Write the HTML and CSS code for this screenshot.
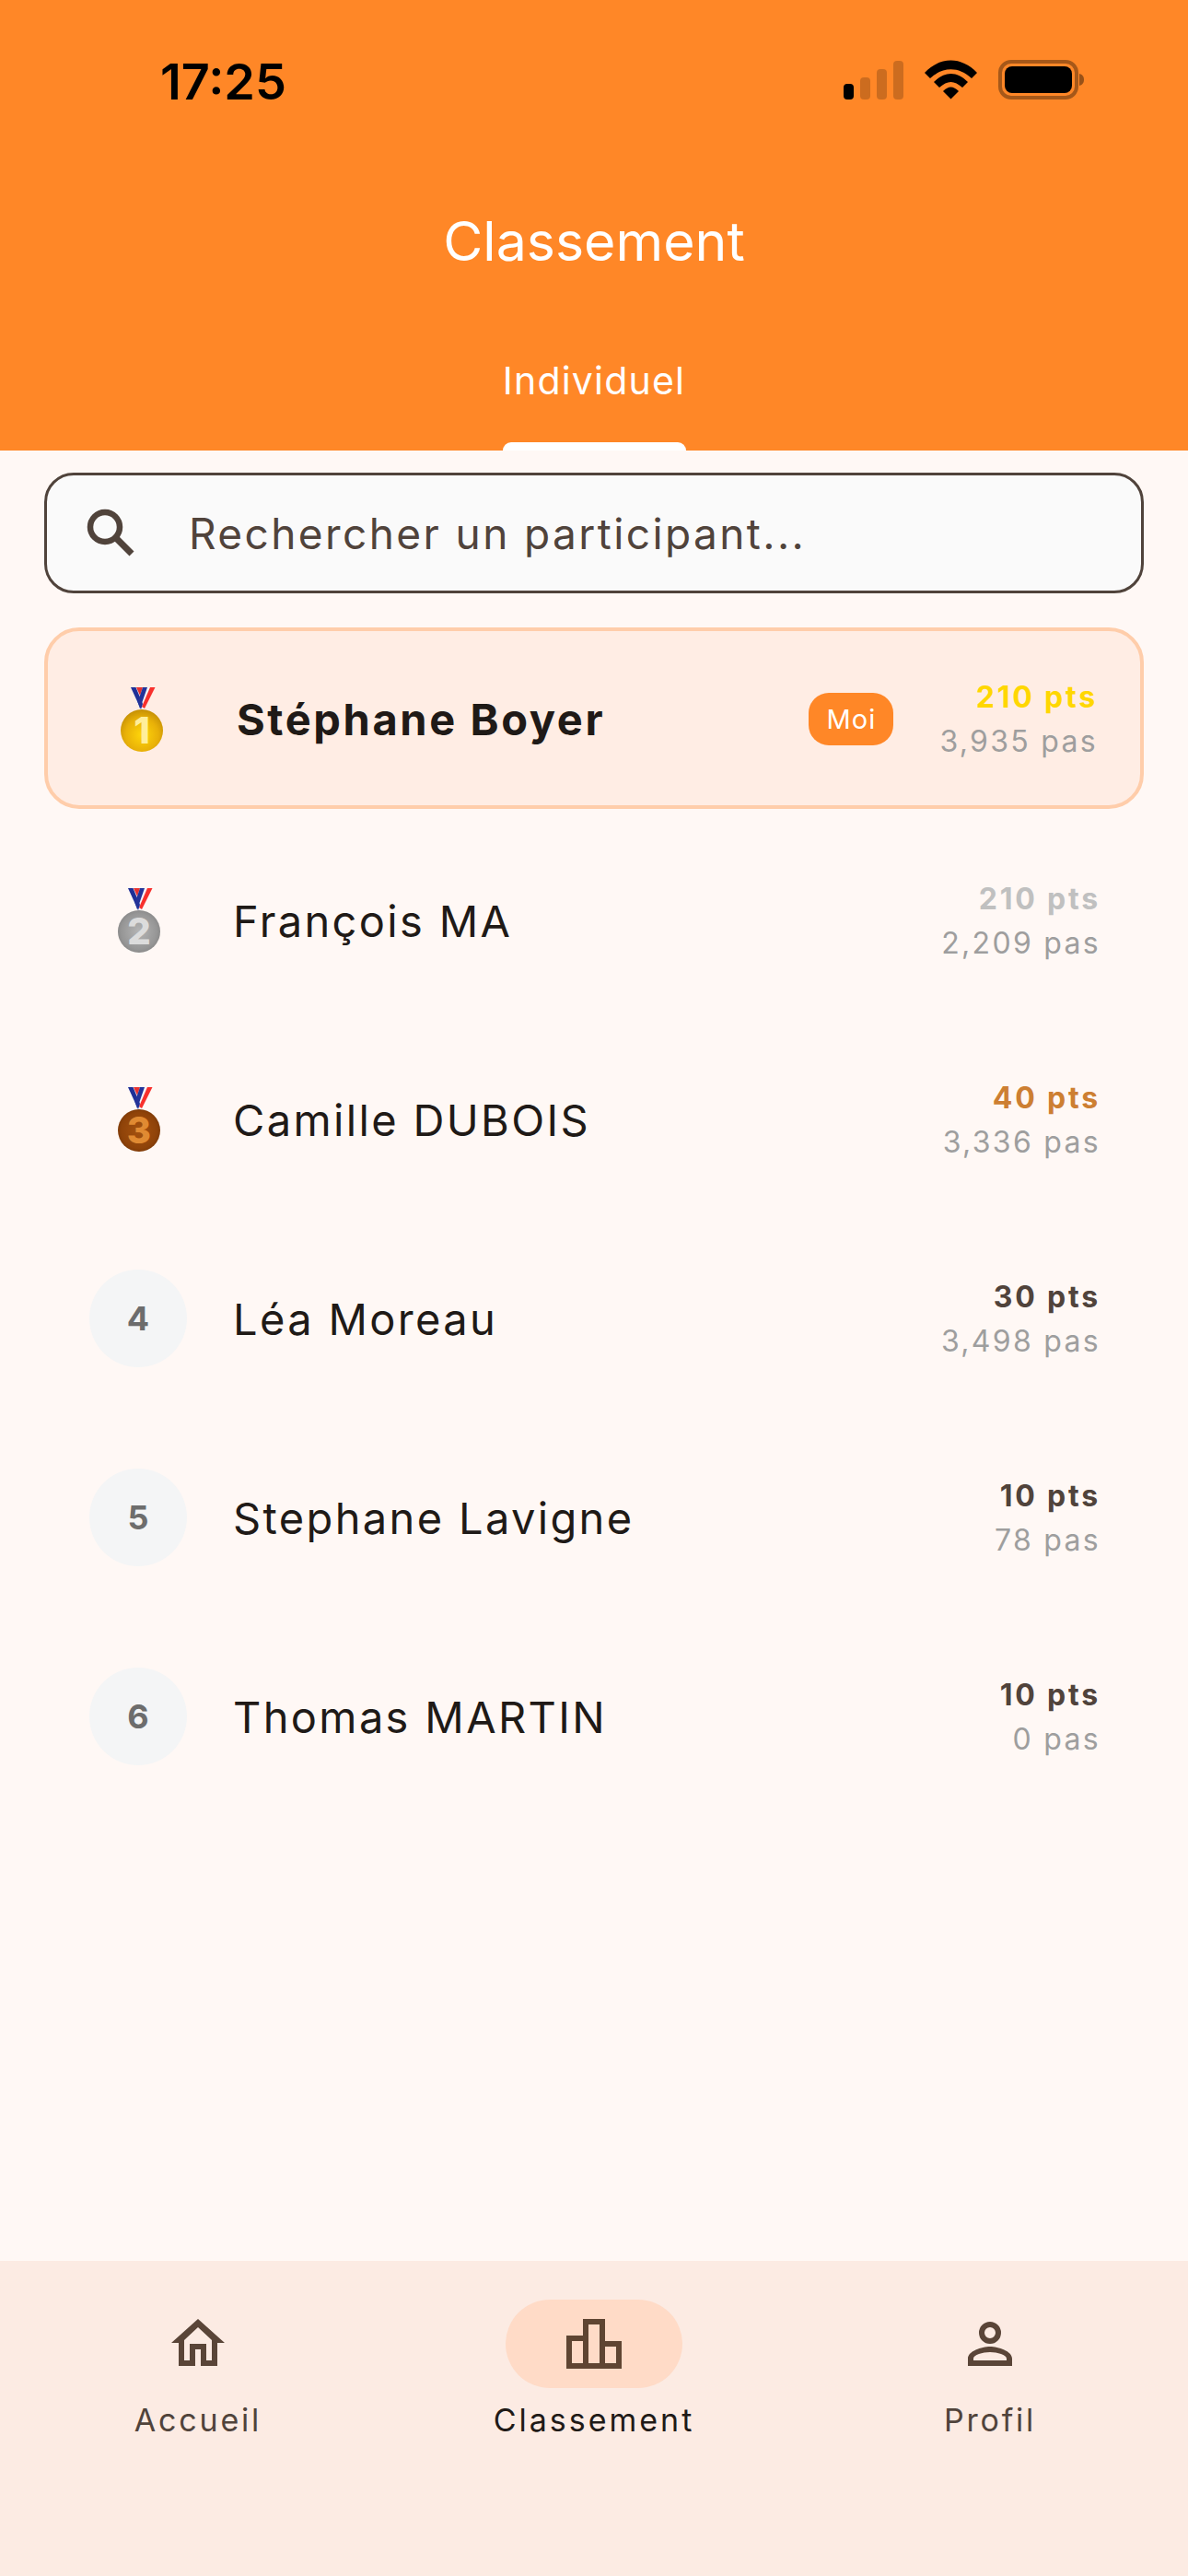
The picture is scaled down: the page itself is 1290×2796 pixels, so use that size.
FILE: index.html
```html
<!DOCTYPE html>
<html lang="fr">
<head>
<meta charset="utf-8">
<title>Classement</title>
<link rel="stylesheet" href="styles.css">
</head>
<body>
<div class="app">
  <header class="header">
    <div class="status">
      <span class="time">17:25</span>
      <svg class="status-icons" width="261" height="43" viewBox="0 0 261 43">
        <rect x="0" y="26" width="11" height="17" rx="4" fill="#000"/>
        <rect x="18" y="19" width="11" height="24" rx="4" fill="#000" fill-opacity=".2"/>
        <rect x="36" y="10" width="11" height="33" rx="4" fill="#000" fill-opacity=".2"/>
        <rect x="54" y="1" width="11" height="42" rx="4" fill="#000" fill-opacity=".2"/>
        <path d="M88 14 C105 -4 128 -4 145 14 L139 20 C125 7 108 7 94 20 Z" fill="#000"/>
        <path d="M98 24 C110 12 123 12 135 24 L129 30 C120 22 113 22 104 30 Z" fill="#000"/>
        <path d="M108 34 C114 28 119 28 125 34 L116.500 42.500 Z" fill="#000"/>
        <rect x="170" y="2" width="83" height="39" rx="12" fill="none" stroke="#000" stroke-opacity=".35" stroke-width="4"/>
        <rect x="175" y="7" width="73" height="29" rx="8" fill="#000"/>
        <path d="M256 15 C260 16 261 19 261 21.500 C261 24 260 27 256 28 Z" fill="#000" fill-opacity=".4"/>
      </svg>
    </div>
    <h1 class="title">Classement</h1>
    <div class="tab">Individuel</div>
    <div class="tab-bar"></div>
  </header>

  <main class="content">
    <div class="search">
      <svg class="search-icon" width="60" height="60" viewBox="0 0 60 60">
        <circle cx="24" cy="23" r="16" fill="none" stroke="#50433B" stroke-width="6.500"/>
        <path d="M36 35 L53 52" fill="none" stroke="#50433B" stroke-width="7"/>
      </svg>
      <span class="search-text">Rechercher un participant...</span>
    </div>

    <ul class="list">
      <li class="row row-me">
        <div class="rank">
          <svg class="medal" width="60" height="70" viewBox="0 0 60 70">
            <defs><radialGradient id="gold" cx=".5" cy=".6" r=".6"><stop offset="0" stop-color="#FFD60A"/><stop offset=".65" stop-color="#E8B008"/><stop offset="1" stop-color="#C48F06"/></radialGradient></defs>
            <polygon points="18,0 44,0 33,24 28,24" fill="#F4F4F8"/>
            <polygon points="24,0 31,0 28,9" fill="#E8322F"/>
            <polygon points="39,0 44.500,0 33,23 30,21" fill="#F8302C"/>
            <polygon points="18,0 23.500,0 31,18 29,24" fill="#1F2F96"/>
            <polygon points="31,0 36,0 28,23 25.500,16" fill="#233399"/>
            <circle cx="30" cy="47" r="23" fill="url(#gold)"/>
            <text class="medal-digit medal-digit-gold" x="30" y="61">1</text>
          </svg>
        </div>
        <span class="name name-me">Stéphane Boyer</span>
        <span class="badge">Moi</span>
        <div class="score">
          <span class="pts pts-gold">210 pts</span>
          <span class="pas">3,935 pas</span>
        </div>
      </li>
      <li class="row">
        <div class="rank">
          <svg class="medal" width="60" height="70" viewBox="0 0 60 70">
            <defs><radialGradient id="silver" cx=".5" cy=".5" r=".6"><stop offset="0" stop-color="#B5B5B5"/><stop offset=".7" stop-color="#969696"/><stop offset="1" stop-color="#7E7E7E"/></radialGradient></defs>
            <polygon points="18,0 44,0 33,24 28,24" fill="#F4F4F8"/>
            <polygon points="24,0 31,0 28,9" fill="#E8322F"/>
            <polygon points="39,0 44.500,0 33,23 30,21" fill="#F8302C"/>
            <polygon points="18,0 23.500,0 31,18 29,24" fill="#1F2F96"/>
            <polygon points="31,0 36,0 28,23 25.500,16" fill="#233399"/>
            <circle cx="30" cy="47" r="23" fill="url(#silver)"/>
            <text class="medal-digit medal-digit-silver" x="30" y="61">2</text>
          </svg>
        </div>
        <span class="name">François MA</span>
        <div class="score">
          <span class="pts pts-silver">210 pts</span>
          <span class="pas">2,209 pas</span>
        </div>
      </li>
      <li class="row">
        <div class="rank">
          <svg class="medal" width="60" height="70" viewBox="0 0 60 70">
            <defs><radialGradient id="bronze" cx=".5" cy=".5" r=".6"><stop offset="0" stop-color="#A5520F"/><stop offset=".7" stop-color="#8F4309"/><stop offset="1" stop-color="#6E3206"/></radialGradient></defs>
            <polygon points="18,0 44,0 33,24 28,24" fill="#F4F4F8"/>
            <polygon points="24,0 31,0 28,9" fill="#E8322F"/>
            <polygon points="39,0 44.500,0 33,23 30,21" fill="#F8302C"/>
            <polygon points="18,0 23.500,0 31,18 29,24" fill="#1F2F96"/>
            <polygon points="31,0 36,0 28,23 25.500,16" fill="#233399"/>
            <circle cx="30" cy="47" r="23" fill="url(#bronze)"/>
            <text class="medal-digit medal-digit-bronze" x="30" y="61">3</text>
          </svg>
        </div>
        <span class="name">Camille DUBOIS</span>
        <div class="score">
          <span class="pts pts-bronze">40 pts</span>
          <span class="pas">3,336 pas</span>
        </div>
      </li>
      <li class="row">
        <div class="rank rank-circle">4</div>
        <span class="name">Léa Moreau</span>
        <div class="score">
          <span class="pts">30 pts</span>
          <span class="pas">3,498 pas</span>
        </div>
      </li>
      <li class="row">
        <div class="rank rank-circle">5</div>
        <span class="name">Stephane Lavigne</span>
        <div class="score">
          <span class="pts">10 pts</span>
          <span class="pas">78 pas</span>
        </div>
      </li>
      <li class="row">
        <div class="rank rank-circle">6</div>
        <span class="name">Thomas MARTIN</span>
        <div class="score">
          <span class="pts">10 pts</span>
          <span class="pas">0 pas</span>
        </div>
      </li>
    </ul>
  </main>

  <nav class="nav">
    <div class="nav-item">
      <div class="nav-icon">
        <svg width="72" height="72" viewBox="0 0 72 72">
          <path fill-rule="evenodd" fill="#5A4538" d="M36 9 L7 35 H15 V60 H33 V42 H39 V60 H57 V35 H65 Z M36 18 L21 32 V54 H27 V36 H45 V54 H51 V32 Z"/>
        </svg>
      </div>
      <span class="nav-label">Accueil</span>
    </div>
    <div class="nav-item">
      <div class="nav-icon nav-icon-active">
        <svg width="72" height="72" viewBox="0 0 72 72">
          <g fill="none" stroke="#5F4532" stroke-width="6">
            <rect x="9" y="30" width="18" height="30"/>
            <rect x="27" y="12" width="18" height="48"/>
            <rect x="45" y="36" width="18" height="24"/>
          </g>
        </svg>
      </div>
      <span class="nav-label nav-label-active">Classement</span>
    </div>
    <div class="nav-item">
      <div class="nav-icon">
        <svg width="72" height="72" viewBox="0 0 72 72">
          <circle cx="36" cy="24" r="9" fill="none" stroke="#5A4538" stroke-width="6"/>
          <path fill-rule="evenodd" fill="#5A4538" d="M12 60 V52 C12 44 27 39 36 39 C45 39 60 44 60 52 V60 Z M18 54 H54 V52 C54 48 44 45 36 45 C28 45 18 48 18 52 Z"/>
        </svg>
      </div>
      <span class="nav-label">Profil</span>
    </div>
  </nav>
</div>
</body>
</html>
```
FILE: styles.css
```css
* { box-sizing: border-box; }
html, body { margin: 0; padding: 0; }
body { font-family: Inter, "Noto Sans", sans-serif; background: #FFF8F5; color: #1F1A17; }

.app { width: 1290px; height: 2796px; display: flex; flex-direction: column; overflow: hidden; }

/* Header */
.header { height: 489px; background: #FF8727; display: flex; flex-direction: column; align-items: center; flex: none; }
.status { width: 100%; height: 108px; padding: 0 113px 0 174px; display: flex; justify-content: space-between; align-items: flex-end; }
.time { font-size: 54px; line-height: 62px; font-weight: 600; color: #000; letter-spacing: 0; margin-bottom: -12px; }
.title { margin: 124px 0 0; font-size: 59px; line-height: 60px; font-weight: 400; color: #fff; letter-spacing: 0; }
.tab { margin-top: 96px; font-size: 41px; line-height: 50px; color: #fff; letter-spacing: 1.2px; }
.tab-bar { width: 199px; height: 9px; margin-top: auto; background: #fff; border-radius: 9px 9px 0 0; }

/* Content */
.content { flex: 1; padding-top: 24px; }
.search { margin: 0 48px; height: 131px; border: 3px solid #50433B; border-radius: 32px; background: #FAFAFA; display: flex; align-items: center; padding-left: 39px; }
.search-icon { flex: none; }
.search-text { margin-left: 55px; font-size: 46px; letter-spacing: 2.4px; color: #50433B; }

.list { list-style: none; margin: 37px 0 0; padding: 0; }
.row { height: 216px; padding: 0 95px 0 97px; display: flex; align-items: center; }
.row-me { height: 197px; margin: 0 48px 13px; padding: 2px 46px 0 48px; background: #FFEDE4; border: 4px solid #FFCDAA; border-radius: 38px; }

.rank { width: 106px; height: 106px; flex: none; display: flex; align-items: center; justify-content: center; }
.rank-circle { border-radius: 50%; background: #F4F5F6; color: #6D6D6D; font-size: 36px; font-weight: 700; }
.medal { margin-left: 2px; }
.medal-digit { font-family: Inter, sans-serif; font-size: 40px; font-weight: 800; text-anchor: middle; }
.medal-digit-gold { fill: #FFEE9A; }
.medal-digit-silver { fill: #DCDCDC; }
.medal-digit-bronze { fill: #E08A32; }

.name { margin-left: 50px; font-size: 47px; letter-spacing: 2.35px; color: #1F1A17; flex: 1; }
.name-me { font-weight: 700; margin-left: 51px; letter-spacing: 2.6px; }
.badge { height: 57px; width: 92px; margin-right: 50px; border-radius: 22px; background: #FF8727; color: #fff; font-size: 29px; letter-spacing: 1px; display: flex; align-items: center; justify-content: center; }
.score { display: flex; flex-direction: column; align-items: flex-end; gap: 9px; font-size: 32px; line-height: 39px; }
.pts { font-weight: 700; color: #50433B; letter-spacing: 2.8px; }
.pts-gold { color: #FFD700; }
.pts-silver { color: #C0C0C0; }
.pts-bronze { color: #CD7F32; }
.pas { color: #9E9E9E; letter-spacing: 2.3px; }

/* Bottom nav */
.nav { height: 342px; flex: none; background: #FCEBE3; display: grid; grid-template-columns: repeat(3, 1fr); padding-top: 42px; align-items: start; }
.nav-item { display: flex; flex-direction: column; align-items: center; }
.nav-icon { width: 192px; height: 96px; border-radius: 48px; display: flex; align-items: center; justify-content: center; }
.nav-icon-active { background: #FFDBC7; }
.nav-label { margin-top: 13px; font-size: 34px; line-height: 44px; letter-spacing: 2.8px; color: #50433B; }
.nav-label-active { color: #1F1A17; font-weight: 400; letter-spacing: 3px; }
```
